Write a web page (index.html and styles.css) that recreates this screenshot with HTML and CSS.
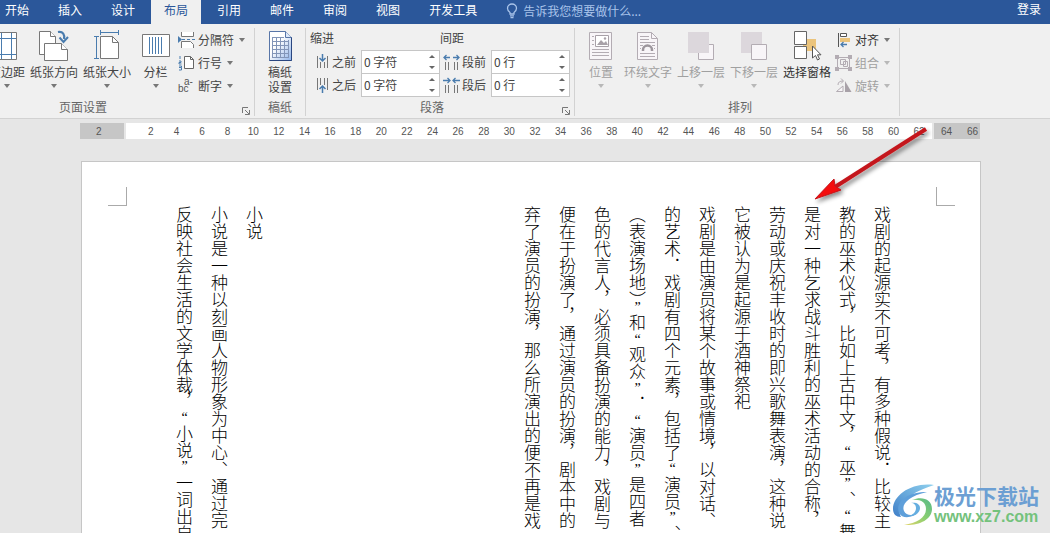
FILE: index.html
```html
<!DOCTYPE html>
<html lang="zh-CN">
<head>
<meta charset="utf-8">
<title>文档 - 布局</title>
<link rel="stylesheet" href="styles.css">
</head>
<body>
<header class="tabbar">
  <nav class="tabs">
    <button class="tab">开始</button>
    <button class="tab">插入</button>
    <button class="tab">设计</button>
    <button class="tab active">布局</button>
    <button class="tab">引用</button>
    <button class="tab">邮件</button>
    <button class="tab">审阅</button>
    <button class="tab">视图</button>
    <button class="tab">开发工具</button>
  </nav>
  <button class="tell">
    <svg width="12" height="16" viewBox="0 0 12 16" fill="none" stroke="#a9c4ea" stroke-width="1.3"><path d="M4 11V9.500C2.500 8.500 1.500 7 1.500 5.300a4.500 4.300 0 0 1 9 0C10.500 7 9.500 8.500 8 9.500V11zM4 12.800h4M4.500 14.600h3"/></svg>
    <span>告诉我您想要做什么...</span>
  </button>
  <a class="login" href="#">登录</a>
</header>

<section class="ribbon">
  <div class="group page-setup">
    <div class="tools">
      <button class="big margins">
        <svg width="32" height="32" viewBox="0 0 32 32" fill="#fff"><path d="M5.500 2.500h20v27h-20z" stroke="#777"/><path d="M5 8.500h20M5 24.500h20M10.500 3v26M20.500 3v26" stroke="#4a7cae"/></svg>
        <span>页边距</span><i class="caret"></i>
      </button>
      <button class="big">
        <svg width="32" height="32" viewBox="0 0 32 32"><g fill="#fff" stroke="#777"><path d="M1.500 1.500h11l5 5v18h-16z"/><path d="M12.500 1.500v5h5"/><path d="M6.500 13.500h17l6 6v11h-23z"/><path d="M23.500 13.500v6h6"/></g><path d="M20 2c5-1 7 3 6 7" fill="none" stroke="#4a7cae" stroke-width="2.200"/><path d="M21.500 7.500L25.500 12 30 7" fill="none" stroke="#4a7cae" stroke-width="2"/></svg>
        <span>纸张方向</span><i class="caret"></i>
      </button>
      <button class="big">
        <svg width="32" height="32" viewBox="0 0 32 32"><path d="M9.500 6.500h12l6 6v16h-18z" fill="#fff" stroke="#777"/><path d="M21.500 6.500v6h6" fill="none" stroke="#777"/><path d="M9 2.500h19M9.500 0v5M27.500 0v5M5.500 6v23M3 6.500h5M3 28.500h5" stroke="#4a7cae"/></svg>
        <span>纸张大小</span><i class="caret"></i>
      </button>
      <button class="big columns">
        <svg width="32" height="32" viewBox="0 0 32 32"><path d="M2.500 4.500h27v22h-27z" fill="#fff" stroke="#777"/><path d="M9.500 7v17M12.500 7v17M15.500 7v17M18.500 7v17M21.500 7v17" stroke="#4a7cae"/></svg>
        <span>分栏</span><i class="caret"></i>
      </button>
      <div class="stack">
        <button class="small">
          <svg width="17" height="16" viewBox="0 0 17 16"><path d="M3.500 0v4.500h12V0M3.500 16v-6.500h9l3 3V16" fill="#fff" stroke="#777"/><path d="M0 4l4 3.500L0 11z" fill="#4a7cae"/><path d="M4 7.500h3M9 7.500h3M14 7.500h3" stroke="#4a7cae"/></svg>
          <span>分隔符</span><i class="caret"></i>
        </button>
        <button class="small">
          <svg width="17" height="16" viewBox="0 0 17 16"><path d="M6.500 1.500h6l3 3v9h-9z" fill="#fff" stroke="#666"/><path d="M12.500 1.500v3h3" fill="none" stroke="#666"/><path d="M2 1v3M1 6h2v1.500H1V9h2.500M1 11h2.500v1.500H1M3.500 12.500V15H1" fill="none" stroke="#4a7cae"/></svg>
          <span>行号</span><i class="caret"></i>
        </button>
        <button class="small">
          <svg width="17" height="16" viewBox="0 0 17 16" class="hyphen"><text x="0" y="14">bc</text><text x="6" y="7">a-</text></svg>
          <span>断字</span><i class="caret"></i>
        </button>
      </div>
    </div>
    <h2 class="caption">页面设置</h2>
    <button class="launcher" aria-label="页面设置选项"><svg width="8" height="8" viewBox="0 0 8 8" fill="none" stroke="#777"><path d="M.5 6V.5H6M3 3l4 4M7.500 3v4.500H3"/></svg></button>
  </div>

  <div class="group manuscript">
    <div class="tools">
      <button class="big">
        <svg width="32" height="32" viewBox="0 0 32 32"><defs><linearGradient id="ms" x1="0" y1="0" x2="1" y2="1"><stop offset=".4" stop-color="#fff"/><stop offset="1" stop-color="#8eb2e8"/></linearGradient></defs><path d="M5.500 1.500h16l6 6v23h-22z" fill="url(#ms)" stroke="#5876a8"/><path d="M27.500 7v23.500h-22" fill="none" stroke="#2a4680"/><path d="M21.500 1.500v6h6" fill="#dde8f8" stroke="#5876a8"/><path d="M8 7.500h12M8 11.500h17M8 15.500h17M8 19.500h17M8 23.500h17M8 27.500h17M8.500 7v21M12.500 7v21M16.500 7v21M20.500 10v18M24.500 10v18" fill="none" stroke="#8295b8"/></svg>
        <span>稿纸<br>设置</span>
      </button>
    </div>
    <h2 class="caption">稿纸</h2>
  </div>

  <div class="group paragraph">
    <div class="fields">
      <h3>缩进</h3><h3>间距</h3>
      <div class="field">
        <label for="in-before"><svg width="12" height="16" viewBox="0 0 12 16"><path d="M1.500 2v12M4.500 8v6M8.500 8v6M11.500 2v12" stroke="#777"/><path d="M6.500 0v7M3.500 4l3 3 3-3" fill="none" stroke="#4a7cae" stroke-width="1.500"/></svg>之前</label>
        <span class="spin"><input id="in-before" type="text" value="0 字符"><button class="up" aria-label="增加"></button><button class="down" aria-label="减少"></button></span>
      </div>
      <div class="field">
        <label for="sp-before"><svg width="17" height="16" viewBox="0 0 17 16"><path d="M2.500 8v8M5.500 8v8M11.500 8v8M14.500 8v8" stroke="#777"/><path d="M1 3.500h6M3.500 1L1 3.500 3.500 6M10 3.500h6M13.500 1L16 3.500 13.500 6" fill="none" stroke="#4a7cae" stroke-width="1.300"/></svg>段前</label>
        <span class="spin"><input id="sp-before" type="text" value="0 行"><button class="up" aria-label="增加"></button><button class="down" aria-label="减少"></button></span>
      </div>
      <div class="field">
        <label for="in-after"><svg width="12" height="16" viewBox="0 0 12 16"><path d="M1.500 1v12M4.500 1v7M8.500 1v7M11.500 1v12" stroke="#777"/><path d="M6.500 16V9M3.500 12l3-3 3 3" fill="none" stroke="#4a7cae" stroke-width="1.500"/></svg>之后</label>
        <span class="spin"><input id="in-after" type="text" value="0 字符"><button class="up" aria-label="增加"></button><button class="down" aria-label="减少"></button></span>
      </div>
      <div class="field">
        <label for="sp-after"><svg width="17" height="16" viewBox="0 0 17 16"><path d="M2.500 8v8M5.500 8v8M11.500 8v8M14.500 8v8" stroke="#777"/><path d="M0 3.500h7M4.500 1L7 3.500 4.500 6M10 3.500h7M12.500 1L10 3.500 12.500 6" fill="none" stroke="#4a7cae" stroke-width="1.300"/></svg>段后</label>
        <span class="spin"><input id="sp-after" type="text" value="0 行"><button class="up" aria-label="增加"></button><button class="down" aria-label="减少"></button></span>
      </div>
    </div>
    <h2 class="caption">段落</h2>
    <button class="launcher" aria-label="段落选项"><svg width="8" height="8" viewBox="0 0 8 8" fill="none" stroke="#777"><path d="M.5 6V.5H6M3 3l4 4M7.500 3v4.500H3"/></svg></button>
  </div>

  <div class="group arrange">
    <div class="tools">
      <button class="big position" disabled>
        <svg width="32" height="32" viewBox="0 0 32 32"><path d="M4.500 2.500h22v27h-22z" fill="#f8f5f8" stroke="#b3acb3"/><path d="M10.500 5.500h13v11h-13z" fill="#fff" stroke="#a8a1a8"/><path d="M12 15l4-5 3 3 2-2 2 4z" fill="#a8a1a8"/><circle cx="20" cy="8.500" r="1.200" fill="#a8a1a8"/><path d="M7 6.500h2M7 10.500h2M7 14.500h2M7 19.500h17M7 22.500h17M7 25.500h17" stroke="#b3acb3"/></svg>
        <span>位置</span><i class="caret"></i>
      </button>
      <button class="big" disabled>
        <svg width="32" height="32" viewBox="0 0 32 32"><path d="M5.500 2.500h14l6 6v21h-20z" fill="#f8f5f8" stroke="#b3acb3"/><path d="M19.500 2.500v6h6" fill="none" stroke="#b3acb3"/><path d="M8 6.500h9M8 9.500h9M8 12.500h15M8 15.500h3M20 15.500h3M8 18.500h1M22 18.500h1M8 23.500h15M8 26.500h15" stroke="#b3acb3"/><path d="M11 21v-1a4.500 4.500 0 0 1 9 0v1" fill="none" stroke="#9d969d" stroke-width="2.500"/></svg>
        <span>环绕文字</span><i class="caret"></i>
      </button>
      <button class="big" disabled>
        <svg width="32" height="32" viewBox="0 0 32 32"><path d="M13.500 14.500h15v15h-15z" fill="#f8f5f8" stroke="#b3acb3"/><path d="M3 2h21v21H3z" fill="#dcd7dc"/></svg>
        <span>上移一层</span><i class="caret"></i>
      </button>
      <button class="big" disabled>
        <svg width="32" height="32" viewBox="0 0 32 32"><path d="M3 2h21v21H3z" fill="#dcd7dc"/><path d="M13.500 14.500h15v15h-15z" fill="#f8f5f8" stroke="#b3acb3"/></svg>
        <span>下移一层</span><i class="caret"></i>
      </button>
      <button class="big selection">
        <svg width="32" height="32" viewBox="0 0 32 32"><path d="M12 9h13v12H12z" fill="#ebc47c"/><path d="M3.500 1.500h12v13h-12zM3.500 16.500h12v12h-12z" fill="#fff" stroke="#666"/><path d="M21.500 16v12l3-2.500 2 4.500 2-1-2-4.200h3.500z" fill="#fff" stroke="#555"/></svg>
        <span>选择窗格</span>
      </button>
      <div class="stack">
        <button class="small">
          <svg width="17" height="16" viewBox="0 0 17 16"><path d="M3.500 1v14" stroke="#555"/><path d="M5.500 1.500h6v3h-6z" fill="#fff" stroke="#555"/><path d="M5 6h10v4H5z" fill="#ebc47c"/><path d="M12 12.500H6M8.500 10L6 12.500 8.500 15" fill="none" stroke="#4a7cae" stroke-width="1.300"/></svg>
          <span>对齐</span><i class="caret"></i>
        </button>
        <button class="small" disabled>
          <svg width="17" height="16" viewBox="0 0 17 16"><path d="M2.500 2.500h12v11h-12zM5.500 4.500h5v5h-5zM8.500 6.500h4v5h-4z" fill="none" stroke="#b3acb3"/><path d="M0 0h4v4H0zM13 0h4v4h-4zM0 12h4v4H0zM13 12h4v4h-4z" fill="#b3acb3"/></svg>
          <span>组合</span><i class="caret"></i>
        </button>
        <button class="small" disabled>
          <svg width="17" height="16" viewBox="0 0 17 16"><path d="M1.500 13.500L8 8v5.500z" fill="#f8f5f8" stroke="#b3acb3"/><path d="M10 3l6.500 11H10z" fill="#a8a1a8"/><path d="M3 7c0-3 2-4 5-4M6 .5L8.500 3 6 5.500" fill="none" stroke="#b3acb3"/></svg>
          <span>旋转</span><i class="caret"></i>
        </button>
      </div>
    </div>
    <h2 class="caption">排列</h2>
  </div>
</section>

<main class="workspace">
  <div class="ruler">
    <div class="edge left"><span>2</span></div>
    <div class="scale">
      <span>2</span><span>4</span><span>6</span><span>8</span><span>10</span><span>12</span><span>14</span><span>16</span><span>18</span><span>20</span><span>22</span><span>24</span><span>26</span><span>28</span><span>30</span><span>32</span><span>34</span><span>36</span><span>38</span><span>40</span><span>42</span><span>44</span><span>46</span><span>48</span><span>50</span><span>52</span><span>54</span><span>56</span><span>58</span><span>60</span><span>62</span>
    </div>
    <div class="edge right"><span>64</span><span>66</span></div>
  </div>
  <article class="page">
    <div class="corners"><i class="corner start"></i><i class="corner end"></i></div>
    <div class="text">
      <p>戏剧的起源实不可考，有多种假说．比较主<br>教的巫术仪式，比如上古中文，<b>“</b>巫<b>”</b>、<b>“</b>舞<br>是对一种乞求战斗胜利的巫术活动的合称，<br>劳动或庆祝丰收时的即兴歌舞表演，这种说<br>它被认为是起源于酒神祭祀</p>
      <p>戏剧是由演员将某个故事或情境，以对话、<br>的艺术．戏剧有四个元素，包括了<b>“</b>演员<b>”</b>、<br>（表演场地）<b>”</b>和<b>“</b>观众<b>”</b>．<b>“</b>演员<b>”</b>是四者<br>色的代言人，必须具备扮演的能力，戏剧与<br>便在于扮演了，通过演员的扮演，剧本中的<br>弃了演员的扮演，那么所演出的便不再是戏</p>
      <p class="novel">小说</p>
      <p>小说是一种以刻画人物形象为中心、通过完<br>反映社会生活的文学体裁，<b>“</b>小说<b>”</b>一词出自</p>
    </div>
  </article>
  <svg class="pointer" width="124" height="84" viewBox="0 0 124 84">
    <defs><filter id="sh" x="-20%" y="-20%" width="140%" height="140%"><feDropShadow dx="2" dy="3" stdDeviation="2" flood-color="#000" flood-opacity=".45"/></filter></defs>
    <g filter="url(#sh)"><path d="M115 6L24 64" stroke="#c4161c" stroke-width="4"/><path d="M4 76L23 56 24 63 30 67z" fill="#f40b0b" stroke="#c4161c"/></g>
  </svg>
  <div class="brand">
    <svg width="42" height="42" viewBox="0 0 42 42"><defs><linearGradient id="bl" x1="0" y1="1" x2="1" y2="0"><stop offset="0" stop-color="#3f7fc8"/><stop offset="1" stop-color="#8fd0ee"/></linearGradient><linearGradient id="gr" x1="0" y1="1" x2="1" y2="0"><stop offset="0" stop-color="#e5d56a"/><stop offset=".5" stop-color="#8ccf70"/><stop offset="1" stop-color="#55b98a"/></linearGradient></defs><path d="M42 1C20-2 1 11 1 25c0 5 3 8 8 8-5-9 2-22 33-32z" fill="url(#bl)"/><path d="M35 8C17 12 9 20 12 27c2 5 9 5 14 2-6 5-16 6-19 0C3 18 15 8 35 8z" fill="#5e9fda"/><path d="M20 16c10-4 20-1 20 9 0 11-14 17-28 16 12-2 22-7 22-16 0-7-6-10-14-9z" fill="url(#gr)"/><path d="M19 19c5-1 9 1 9 5 0 5-6 9-12 8 5-1 8-4 8-8 0-3-2-5-5-5z" fill="#65aee0"/></svg>
    <div class="brand-text"><strong>极光下载站</strong><span>www.xz7.com</span></div>
  </div>
</main>
</body>
</html>
```

FILE: styles.css
```css
* { box-sizing: border-box; }
body {
  margin: 0;
  height: 100vh;
  display: flex;
  flex-direction: column;
  overflow: hidden;
  background: #e6e6e6;
  color: #444;
  font: 12px/16px "Noto Sans CJK SC", sans-serif;
}
button {
  margin: 0;
  padding: 0;
  border: 0;
  background: none;
  color: inherit;
  font: inherit;
  white-space: nowrap;
}
button:disabled { color: #a0a0a0; }
svg { display: block; flex: none; }
h2, h3, p { margin: 0; font-size: 12px; font-weight: 400; }

.tabbar {
  display: flex;
  flex: none;
  height: 24px;
  background: #2b579a;
  color: #fff;
}
.tabs { display: flex; gap: 3px; margin-left: -8px; }
.tab { padding: 0 13px 4px; }
.tab.active { background: #f0f0f0; color: #2b579a; }
.tell {
  display: flex;
  align-items: center;
  gap: 5px;
  margin-left: 16px;
  padding-bottom: 2px;
  color: #a9c4ea;
}
.login { margin: 1px 9px 0 auto; color: #fff; text-decoration: none; }

.ribbon {
  display: flex;
  flex: none;
  padding: 4px 0 2px;
  background: #f0f0f0;
  border-bottom: 1px solid #d2d2d2;
}
.group {
  position: relative;
  display: flex;
  flex-direction: column;
  flex: none;
  border-right: 1px solid #d2d2d2;
}
.tools { display: flex; height: 70px; }
.caption { line-height: 18px; text-align: center; color: #666; }
.launcher { position: absolute; right: 4px; bottom: 1px; }
.big {
  display: flex;
  flex-direction: column;
  align-items: center;
  width: 52px;
  margin-right: 1px;
  padding-top: 2px;
}
.big span { margin-top: 2px; }
.big .caret { margin-top: 4px; }
.caret {
  border: 3px solid transparent;
  border-top: 4px solid #777;
  border-bottom: 0;
}
button:disabled .caret { border-top-color: #b8b8b8; }
.stack { display: flex; flex-direction: column; }
.small { display: flex; align-items: center; gap: 3px; height: 23px; text-align: left; }
.small .caret { margin-left: 2px; }
.hyphen { fill: #555; font: 10px "Liberation Sans", Arial, sans-serif; }

.page-setup { width: 255px; padding-right: 6px; }
.page-setup .caption { margin-right: 82px; }
.margins { width: 38px; margin-left: -12px; margin-right: 2px; }
.columns { width: 43px; margin-right: 1px; }
.manuscript { width: 51px; }
.manuscript .tools { justify-content: center; }
.manuscript .big { margin: 0; line-height: 15px; }

.paragraph { width: 269px; }
.paragraph .caption { margin-right: 16px; }
.fields {
  display: grid;
  grid-template-columns: 130px 130px;
  grid-template-rows: 22px 23px 23px;
  height: 70px;
  padding-left: 4px;
}
.fields h3 { line-height: 20px; }
.field { display: flex; justify-content: flex-end; }
.field label { display: flex; align-items: center; gap: 4px; padding-right: 5px; }
.field:nth-child(even) label { gap: 2px; }
.spin { position: relative; display: flex; width: 79px; margin-bottom: -1px; }
.spin input {
  width: 100%;
  padding: 0 18px 0 2px;
  border: 1px solid #c6c6c6;
  background: #fff;
  color: #444;
  font: inherit;
}
.up, .down {
  position: absolute;
  right: 5px;
  border: 3px solid transparent;
}
.up { top: 5px; border-top: 0; border-bottom: 3px solid #666; }
.down { bottom: 5px; border-bottom: 0; border-top: 3px solid #666; }

.arrange { width: 325px; padding-left: 6px; }
.position { width: 40px; }
.selection { margin-right: 2px; color: #333; }
.arrange .stack { color: #333; }

.workspace { position: relative; flex: 1; min-height: 0; padding: 4px 70px 0 80px; overflow: hidden; }
.ruler {
  display: flex;
  gap: 2px;
  height: 16px;
  color: #555;
  font: 10px/17px "Liberation Sans", Arial, sans-serif;
}
.edge { display: flex; justify-content: space-between; background: #c6c6c6; }
.left { width: 44px; padding-left: 16px; }
.right { width: 46px; padding: 0 2px 0 7px; }
.scale { display: flex; flex: 1; padding-left: 12px; background: #fff; }
.scale span { flex: 1 1 0; text-align: center; }
.page {
  margin: 22px -1px 0 1px;
  min-height: 100%;
  border: 1px solid #c6c6c6;
  background: #fff;
}
.corners { display: flex; justify-content: space-between; padding: 25px 25px 0 26px; }
.corner { width: 19px; height: 19px; border-bottom: 1px solid #aaa; }
.start { border-right: 1px solid #aaa; }
.end { border-left: 1px solid #aaa; }
.text {
  writing-mode: vertical-rl;
  text-orientation: upright;
  width: 100%;
  padding-right: 80px;
  color: #000;
  font-size: 17px;
  line-height: 35px;
  white-space: nowrap;
}
.text p { font-size: 17px; font-weight: 300; }
.text b { font: 14px/1 "Liberation Serif", "Times New Roman", serif; }
.text .novel { margin-right: 243px; }

.pointer { position: absolute; right: 115px; top: 4px; }
.brand { position: absolute; right: 11px; bottom: 7px; display: flex; align-items: center; }
.brand-text { display: flex; flex-direction: column; white-space: nowrap; }
.brand strong { color: #6c9fd3; font-size: 21px; line-height: 25px; }
.brand span { color: #74c27c; font: bold 16px/18px "Liberation Sans", Arial, sans-serif; }
```
